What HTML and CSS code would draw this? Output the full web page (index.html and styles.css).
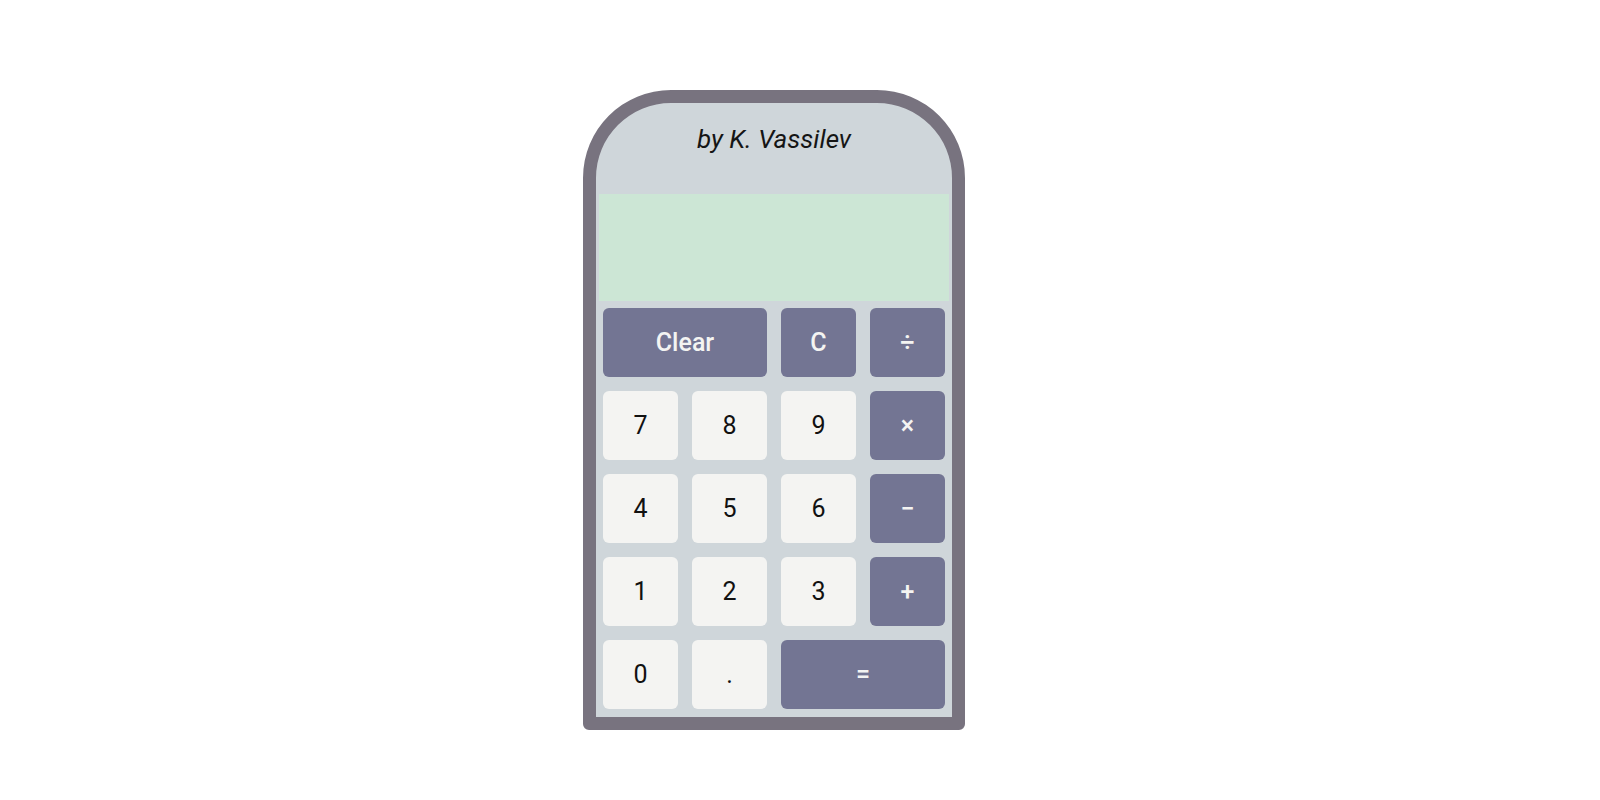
FILE: index.html
```html
<!DOCTYPE html>
<html>
<head>
<meta charset="utf-8">
<link rel="stylesheet" href="styles.css">
</head>
<body>
<div class="page">
  <div class="calc">
    <div class="header"><span class="title">by K. Vassilev</span></div>
    <div class="display"></div>
    <div class="keys">
      <button class="key op wide">Clear</button>
      <button class="key op">C</button>
      <button class="key op">÷</button>
      <button class="key">7</button>
      <button class="key">8</button>
      <button class="key">9</button>
      <button class="key op">×</button>
      <button class="key">4</button>
      <button class="key">5</button>
      <button class="key">6</button>
      <button class="key op">−</button>
      <button class="key">1</button>
      <button class="key">2</button>
      <button class="key">3</button>
      <button class="key op">+</button>
      <button class="key">0</button>
      <button class="key">.</button>
      <button class="key op wide">=</button>
    </div>
  </div>
</div>
</body>
</html>
```
FILE: styles.css
```css
html, body {
  margin: 0;
  padding: 0;
  background: #ffffff;
  font-family: Roboto, "Liberation Sans", sans-serif;
}
.page {
  display: flex;
  justify-content: center;
  padding: 90px 52px 0 0;
}
.calc {
  width: 356px;
  border: 13px solid #78737f;
  border-radius: 88px 88px 6px 6px;
  background: #cfd6da;
  display: flex;
  flex-direction: column;
}
.header {
  height: 91px;
  box-sizing: border-box;
  padding-top: 21px;
  text-align: center;
}
.title {
  font-style: italic;
  font-size: 26px;
  color: #151515;
}
.display {
  height: 107px;
  margin: 0 3px;
  background: #cce6d5;
}
.keys {
  display: grid;
  grid-template-columns: repeat(4, 89px);
  grid-auto-rows: 83px;
  padding-bottom: 1px;
}
.key {
  margin: 7px;
  border: none;
  border-radius: 6px;
  background: #f4f4f2;
  color: #111111;
  font-family: Roboto, "Liberation Sans", sans-serif;
  font-size: 25px;
  font-weight: 400;
  padding: 0;
}
.key.op {
  background: #737593;
  color: #f4f4f2;
  font-weight: 500;
}
.key.wide {
  grid-column: span 2;
}
```
